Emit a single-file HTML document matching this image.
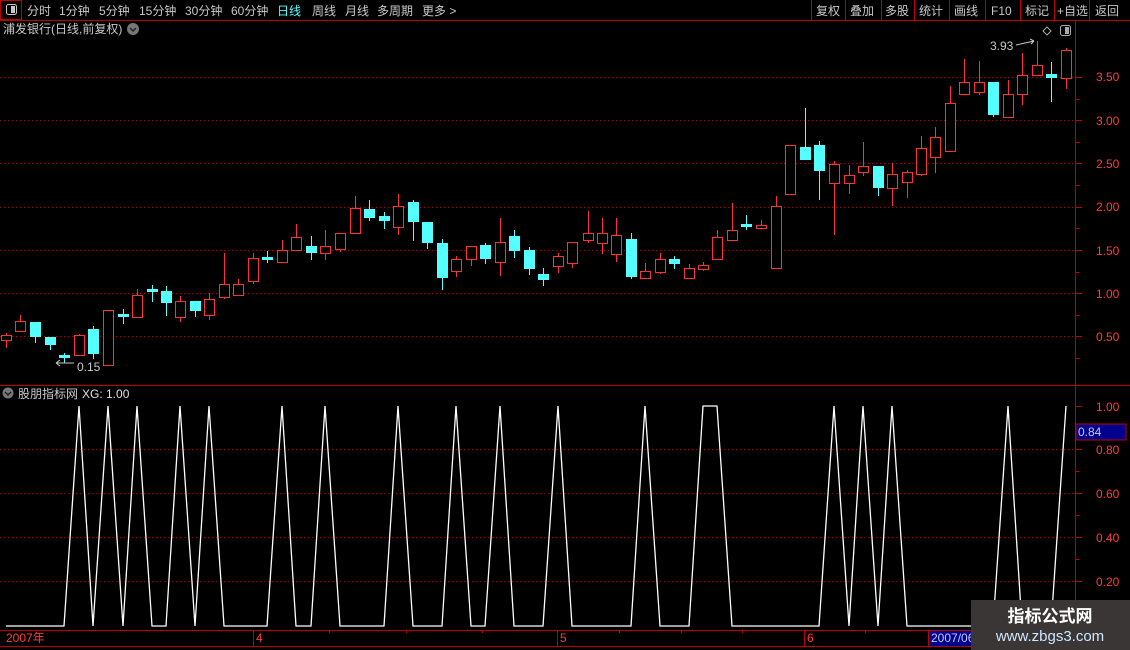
<!DOCTYPE html>
<html><head><meta charset="utf-8"><style>
html,body{margin:0;padding:0;background:#000;width:1130px;height:650px;overflow:hidden}
svg{display:block}
text{font-family:"Liberation Sans","Noto Sans CJK SC",sans-serif;font-size:12px}
.m{fill:#c8c8c8}
.ax{fill:#ff3c3c}
.g{stroke:#b00000;stroke-dasharray:1 3;stroke-width:1}
.r{stroke:#ff3232;fill:#000;stroke-width:1}
.rw{stroke:#ff3232;stroke-width:1}
.c{fill:#54ffff;stroke:#54ffff}
.cw{stroke:#54ffff;stroke-width:1}
</style></head><body>
<svg width="1130" height="650" viewBox="0 0 1130 650" xmlns="http://www.w3.org/2000/svg">
<rect width="1130" height="650" fill="#000"/>
<!-- top bar -->
<rect x="0.5" y="0.5" width="21" height="19" fill="none" stroke="#c00000"/>
<rect x="6.5" y="4.5" width="10" height="10" rx="2" fill="none" stroke="#c8c8c8"/>
<rect x="11" y="6" width="4" height="7" fill="#c8c8c8"/>
<line x1="0" y1="20.5" x2="1130" y2="20.5" stroke="#c00000"/>
<g class="m">
<text x="27" y="15">分时</text><text x="59" y="15">1分钟</text><text x="99" y="15">5分钟</text><text x="139" y="15">15分钟</text><text x="185" y="15">30分钟</text><text x="231" y="15">60分钟</text>
<text x="277" y="15" fill="#54ffff" style="fill:#54ffff">日线</text><text x="312" y="15">周线</text><text x="345" y="15">月线</text><text x="377" y="15">多周期</text><text x="422" y="15">更多 &gt;</text>
</g>
<g stroke="#c00000"><line x1="811.5" y1="0" x2="811.5" y2="20"/><line x1="845.5" y1="0" x2="845.5" y2="20"/><line x1="881.5" y1="0" x2="881.5" y2="20"/><line x1="914.5" y1="0" x2="914.5" y2="20"/><line x1="949.5" y1="0" x2="949.5" y2="20"/><line x1="985.5" y1="0" x2="985.5" y2="20"/><line x1="1020.5" y1="0" x2="1020.5" y2="20"/><line x1="1054.5" y1="0" x2="1054.5" y2="20"/><line x1="1089.5" y1="0" x2="1089.5" y2="20"/></g>
<g class="m"><text x="816" y="15">复权</text><text x="850" y="15">叠加</text><text x="885" y="15">多股</text><text x="919" y="15">统计</text><text x="954" y="15">画线</text><text x="991" y="15">F10</text><text x="1025" y="15">标记</text><text x="1057" y="15">+自选</text><text x="1095" y="15">返回</text></g>
<!-- title -->
<text x="3" y="33" class="m">浦发银行(日线,前复权)</text>
<circle cx="133" cy="29" r="6" fill="#777"/><path d="M130 28l3 3 3-3" stroke="#222" fill="none" stroke-width="1.5"/>
<path d="M1047 27l4 4-4 4-4-4z" fill="none" stroke="#aaa"/>
<rect x="1060.5" y="25.5" width="10" height="10" rx="2" fill="none" stroke="#aaa"/><rect x="1065" y="27" width="4" height="7" fill="#aaa"/>
<!-- axes -->
<line x1="1075.5" y1="20" x2="1075.5" y2="630" stroke="#c00000"/>
<line x1="0" y1="385.5" x2="1130" y2="385.5" stroke="#c00000"/>
<g class="g">
<line x1="0" y1="77.5" x2="1075" y2="77.5"/><line x1="0" y1="120.5" x2="1075" y2="120.5"/><line x1="0" y1="163.5" x2="1075" y2="163.5"/><line x1="0" y1="207.5" x2="1075" y2="207.5"/><line x1="0" y1="250.5" x2="1075" y2="250.5"/><line x1="0" y1="293.5" x2="1075" y2="293.5"/><line x1="0" y1="336.5" x2="1075" y2="336.5"/>
<line x1="0" y1="449.5" x2="1075" y2="449.5"/><line x1="0" y1="493.5" x2="1075" y2="493.5"/><line x1="0" y1="537.5" x2="1075" y2="537.5"/><line x1="0" y1="581.5" x2="1075" y2="581.5"/>
</g>
<g stroke="#c00000">
<line x1="1075" y1="77.5" x2="1082" y2="77.5"/><line x1="1075" y1="120.5" x2="1082" y2="120.5"/><line x1="1075" y1="163.5" x2="1082" y2="163.5"/><line x1="1075" y1="207.5" x2="1082" y2="207.5"/><line x1="1075" y1="250.5" x2="1082" y2="250.5"/><line x1="1075" y1="293.5" x2="1082" y2="293.5"/><line x1="1075" y1="336.5" x2="1082" y2="336.5"/>
<line x1="1075" y1="99.5" x2="1079" y2="99.5"/><line x1="1075" y1="142.5" x2="1079" y2="142.5"/><line x1="1075" y1="185.5" x2="1079" y2="185.5"/><line x1="1075" y1="228.5" x2="1079" y2="228.5"/><line x1="1075" y1="272.5" x2="1079" y2="272.5"/><line x1="1075" y1="315.5" x2="1079" y2="315.5"/><line x1="1075" y1="358.5" x2="1079" y2="358.5"/>
<line x1="1075" y1="406.5" x2="1082" y2="406.5"/><line x1="1075" y1="449.5" x2="1082" y2="449.5"/><line x1="1075" y1="493.5" x2="1082" y2="493.5"/><line x1="1075" y1="537.5" x2="1082" y2="537.5"/><line x1="1075" y1="581.5" x2="1082" y2="581.5"/>
<line x1="1075" y1="471.5" x2="1079" y2="471.5"/><line x1="1075" y1="515.5" x2="1079" y2="515.5"/><line x1="1075" y1="559.5" x2="1079" y2="559.5"/>
</g>
<g class="ax">
<text x="1096" y="81">3.50</text><text x="1096" y="125">3.00</text><text x="1096" y="168">2.50</text><text x="1096" y="211">2.00</text><text x="1096" y="255">1.50</text><text x="1096" y="298">1.00</text><text x="1096" y="341">0.50</text>
<text x="1096" y="411">1.00</text><text x="1096" y="454">0.80</text><text x="1096" y="498">0.60</text><text x="1096" y="542">0.40</text><text x="1096" y="586">0.20</text>
</g>
<rect x="1076" y="424" width="50" height="16" fill="#00008c" stroke="#c00000"/>
<text x="1078" y="436" fill="#c8c8ff">0.84</text>
<!-- candles -->
<g id="candles">
<path class="rw" d="M6.5 333V348M20.5 315V331M79.5 334V355M108.5 310V365M137.5 289V317M180.5 296V322M209.5 293V320M224.5 253V299M238.5 279V295M253.5 253V284M282.5 240V263M296.5 224V250M325.5 230V260M340.5 233V252M355.5 196V233M398.5 194V235M456.5 256V277M471.5 246V266M500.5 218V276M558.5 253V273M572.5 242V268M588.5 211V243M602.5 218V254M616.5 218V262M645.5 263V279M660.5 253V274M689.5 264V278M703.5 262V271M717.5 230V259M732.5 203V241M761.5 220V229M776.5 196V268M790.5 145V194M834.5 161V235M849.5 165V194M863.5 142V176M892.5 163V206M907.5 170V198M921.5 136V176M935.5 127V173M950.5 86V151M964.5 59V94M979.5 61V95M1008.5 80V117M1022.5 53V105M1037.5 41V75M1066.5 48V89"/>
<path class="cw" d="M35.5 322V343M50.5 337V350M64.5 353V363M93.5 326V359M123.5 309V324M152.5 285V302M166.5 286V316M195.5 301V317M267.5 251V263M311.5 236V260M369.5 200V221M384.5 212V229M413.5 200V241M427.5 222V249M442.5 239V290M485.5 243V264M514.5 230V258M529.5 247V275M543.5 268V286M631.5 233V279M674.5 256V269M746.5 215V230M805.5 108V160M819.5 141V200M878.5 166V196M993.5 82V117M1051.5 62V102"/>
<g class="r">
<rect x="1.5" y="335.5" width="10" height="5"/><rect x="15.5" y="321.5" width="10" height="10"/><rect x="74.5" y="335.5" width="10" height="20"/><rect x="103.5" y="310.5" width="10" height="55"/><rect x="132.5" y="295.5" width="10" height="22"/><rect x="175.5" y="301.5" width="10" height="16"/><rect x="204.5" y="299.5" width="10" height="16"/><rect x="219.5" y="284.5" width="10" height="13"/><rect x="233.5" y="284.5" width="10" height="11"/><rect x="248.5" y="258.5" width="10" height="23"/><rect x="277.5" y="250.5" width="10" height="12"/><rect x="291.5" y="237.5" width="10" height="13"/><rect x="320.5" y="246.5" width="10" height="7"/><rect x="335.5" y="233.5" width="10" height="16"/><rect x="350.5" y="208.5" width="10" height="25"/><rect x="393.5" y="206.5" width="10" height="21"/><rect x="451.5" y="259.5" width="10" height="12"/><rect x="466.5" y="246.5" width="10" height="13"/><rect x="495.5" y="242.5" width="10" height="20"/><rect x="553.5" y="256.5" width="10" height="10"/><rect x="567.5" y="242.5" width="10" height="21"/><rect x="583.5" y="233.5" width="10" height="7"/><rect x="597.5" y="233.5" width="10" height="10"/><rect x="611.5" y="235.5" width="10" height="19"/><rect x="640.5" y="271.5" width="10" height="7"/><rect x="655.5" y="259.5" width="10" height="13"/><rect x="684.5" y="268.5" width="10" height="10"/><rect x="698.5" y="265.5" width="10" height="4"/><rect x="712.5" y="237.5" width="10" height="22"/><rect x="727.5" y="230.5" width="10" height="10"/><rect x="756.5" y="225.5" width="10" height="3"/><rect x="771.5" y="206.5" width="10" height="62"/><rect x="785.5" y="145.5" width="10" height="49"/><rect x="829.5" y="164.5" width="10" height="19"/><rect x="844.5" y="175.5" width="10" height="8"/><rect x="858.5" y="166.5" width="10" height="6"/><rect x="887.5" y="174.5" width="10" height="14"/><rect x="902.5" y="172.5" width="10" height="10"/><rect x="916.5" y="148.5" width="10" height="26"/><rect x="930.5" y="137.5" width="10" height="20"/><rect x="945.5" y="103.5" width="10" height="48"/><rect x="959.5" y="82.5" width="10" height="12"/><rect x="974.5" y="82.5" width="10" height="10"/><rect x="1003.5" y="94.5" width="10" height="23"/><rect x="1017.5" y="75.5" width="10" height="19"/><rect x="1032.5" y="65.5" width="10" height="10"/><rect x="1061.5" y="50.5" width="10" height="28"/>
</g>
<g fill="#54ffff">
<rect x="30" y="322" width="11" height="15"/><rect x="45" y="337" width="11" height="8"/><rect x="59" y="355" width="11" height="3"/><rect x="88" y="329" width="11" height="25"/><rect x="118" y="314" width="11" height="3"/><rect x="147" y="289" width="11" height="3"/><rect x="161" y="291" width="11" height="12"/><rect x="190" y="301" width="11" height="10"/><rect x="262" y="257" width="11" height="3"/><rect x="306" y="246" width="11" height="7"/><rect x="364" y="209" width="11" height="9"/><rect x="379" y="216" width="11" height="5"/><rect x="408" y="202" width="11" height="20"/><rect x="422" y="222" width="11" height="21"/><rect x="437" y="243" width="11" height="35"/><rect x="480" y="245" width="11" height="14"/><rect x="509" y="236" width="11" height="15"/><rect x="524" y="250" width="11" height="19"/><rect x="538" y="274" width="11" height="6"/><rect x="626" y="239" width="11" height="38"/><rect x="669" y="259" width="11" height="5"/><rect x="741" y="224" width="11" height="3"/><rect x="800" y="147" width="11" height="13"/><rect x="814" y="145" width="11" height="26"/><rect x="873" y="166" width="11" height="22"/><rect x="988" y="82" width="11" height="33"/><rect x="1046" y="74" width="11" height="4"/>
</g>
</g>
<path d="M56 363h18M56 363l4-3M56 363l4 3" stroke="#c8c8c8" fill="none"/>
<text x="77" y="371" class="m">0.15</text>
<text x="990" y="50" class="m">3.93</text>
<path d="M1016 45l18-4M1034 41l-4-2M1034 41l-3 3" stroke="#c8c8c8" fill="none"/>
<!-- lower panel -->
<circle cx="8" cy="393" r="5.5" fill="#777"/><path d="M5 392l3 3 3-3" stroke="#222" fill="none" stroke-width="1.5"/>
<text x="18" y="398" class="m">股朋指标网</text><text x="82" y="398" fill="#e0e0e0">XG: 1.00</text>
<polyline fill="none" stroke="#fff" stroke-width="1.3" points="6,626 64,626 79,406 93,626 108,406 123,626 137,406 152,626 166,626 180,406 195,626 209,406 224,626 267,626 282,406 296,626 311,626 325,406 340,626 384,626 398,406 413,626 442,626 456,406 471,626 485,626 500,406 514,626 543,626 558,406 572,626 631,626 645,406 660,626 689,626 703,406 717,406 732,626 819,626 834,406 849,626 863,406 878,626 892,406 907,626 993,626 1008,406 1022,626 1051,626 1066,406"/>
<!-- date axis -->
<line x1="0" y1="630.5" x2="1130" y2="630.5" stroke="#c00000"/>
<line x1="0" y1="646.5" x2="1130" y2="646.5" stroke="#c00000"/>
<g stroke="#c00000"><line x1="253.5" y1="630" x2="253.5" y2="646"/><line x1="557.5" y1="630" x2="557.5" y2="646"/><line x1="804.5" y1="630" x2="804.5" y2="646"/><line x1="928.5" y1="630" x2="928.5" y2="646"/><line x1="329.5" y1="630" x2="329.5" y2="633"/><line x1="406.5" y1="630" x2="406.5" y2="633"/><line x1="482.5" y1="630" x2="482.5" y2="633"/><line x1="619.5" y1="630" x2="619.5" y2="633"/><line x1="681.5" y1="630" x2="681.5" y2="633"/><line x1="742.5" y1="630" x2="742.5" y2="633"/><line x1="865.5" y1="630" x2="865.5" y2="633"/></g>
<g class="ax"><text x="6" y="642">2007年</text><text x="256" y="642">4</text><text x="560" y="642">5</text><text x="807" y="642">6</text></g>
<rect x="929" y="631" width="46" height="15" fill="#00008c"/>
<text x="931" y="642" fill="#c8c8ff">2007/06</text>
<!-- watermark -->
<rect x="971" y="600" width="159" height="50" fill="#3a3636"/>
<text x="1050" y="622" text-anchor="middle" fill="#fff" style="font-size:17px;font-weight:bold">指标公式网</text>
<text x="1050" y="641" text-anchor="middle" fill="#cfe6ff" style="font-size:15px">www.zbgs3.com</text>
</svg>
</body></html>
